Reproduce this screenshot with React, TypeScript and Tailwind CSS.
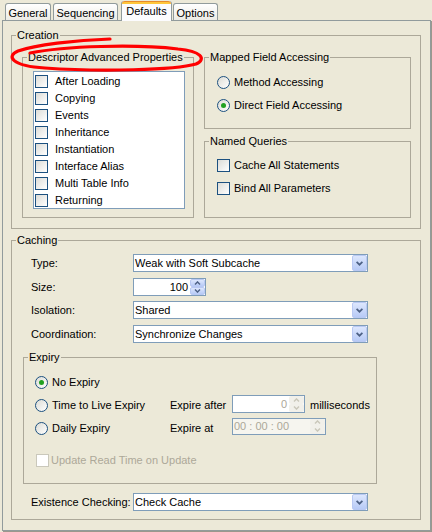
import type { ReactNode } from "react"

const DESCRIPTOR_ITEMS = [
  "After Loading",
  "Copying",
  "Events",
  "Inheritance",
  "Instantiation",
  "Interface Alias",
  "Multi Table Info",
  "Returning",
]

function Chevron({ up, disabled }: { up?: boolean; disabled?: boolean }) {
  return (
    <svg width="7" height="5" viewBox="0 0 7 5">
      <path
        d={up ? "M0.6 4.2 L3.5 1.3 L6.4 4.2" : "M0.6 0.8 L3.5 3.7 L6.4 0.8"}
        fill="none"
        stroke={disabled ? "#c9c7ba" : "#4d6185"}
        strokeWidth="1.7"
      />
    </svg>
  )
}

function SmallChevron({ up, disabled }: { up?: boolean; disabled?: boolean }) {
  return (
    <svg width="7" height="4" viewBox="0 0 7 4">
      <path
        d={up ? "M1 3.4 L3.5 0.9 L6 3.4" : "M1 0.6 L3.5 3.1 L6 0.6"}
        fill="none"
        stroke={disabled ? "#c9c7ba" : "#4d6185"}
        strokeWidth="1.4"
      />
    </svg>
  )
}

function Tab({ label, active, className }: { label: string; active?: boolean; className: string }) {
  if (active) {
    return (
      <div className={`relative z-10 -mb-[1px] h-[20px] rounded-t-[3px] border-x border-[#919b9c] bg-[#fcfcfe] ${className}`}>
        <div className="h-[3px] rounded-t-[3px] border-t border-[#e68b2c] bg-[#ffc73c]" />
        <div className="pt-[1px] text-center leading-[13px]">{label}</div>
      </div>
    )
  }
  return (
    <div
      className={`h-[17px] rounded-t-[3px] border border-b-0 border-[#919b9c] bg-[linear-gradient(180deg,#ffffff,#ecebe5)] pt-[3px] text-center leading-[13px] ${className}`}
    >
      {label}
    </div>
  )
}

function Group({ title, className = "", children }: { title: string; className?: string; children: ReactNode }) {
  return (
    <fieldset className={`min-w-0 border border-[#aca899] ${className}`}>
      <legend className="ml-[4px] px-[1px] leading-[13px]">{title}</legend>
      {children}
    </fieldset>
  )
}

function Check({ disabled }: { disabled?: boolean }) {
  return (
    <span
      className={
        disabled
          ? "h-[13px] w-[13px] shrink-0 border border-[#cac8bb] bg-white"
          : "h-[13px] w-[13px] shrink-0 border border-[#1c5180] bg-[linear-gradient(135deg,#dcdcd7,#ffffff)]"
      }
    />
  )
}

function Radio({ checked }: { checked?: boolean }) {
  return (
    <span className="flex h-[13px] w-[13px] shrink-0 items-center justify-center rounded-full border border-[#1c5180] bg-[linear-gradient(135deg,#dcdcd5,#ffffff)]">
      {checked && <span className="h-[5px] w-[5px] rounded-full bg-[#21a121]" />}
    </span>
  )
}

function Combo({ value }: { value: string }) {
  return (
    <div className="flex h-[18px] w-[235px] border border-[#7f9db9] bg-white">
      <span className="flex-1 pl-[1px] leading-[16px]">{value}</span>
      <span className="flex w-[15px] items-center justify-center rounded-[2px] border border-[#b9c9f3] bg-[linear-gradient(180deg,#dde7fd,#b7caf6)]">
        <Chevron />
      </span>
    </div>
  )
}

function SpinArrows({ disabled }: { disabled?: boolean }) {
  const btn = disabled
    ? "flex flex-1 items-center justify-center rounded-[2px] bg-[#f1f0ea]"
    : "flex flex-1 items-center justify-center rounded-[2px] border border-[#b9c9f3] bg-[linear-gradient(180deg,#dde7fd,#b7caf6)]"
  return (
    <span className="flex w-[15px] flex-col">
      <span className={btn}>
        <SmallChevron up disabled={disabled} />
      </span>
      <span className={btn}>
        <SmallChevron disabled={disabled} />
      </span>
    </span>
  )
}

function Row({ label, className = "", children }: { label: string; className?: string; children: ReactNode }) {
  return (
    <div className={`flex items-center pl-[8px] ${className}`}>
      <span className="w-[102px] shrink-0">{label}</span>
      {children}
    </div>
  )
}

export default function App() {
  return (
    <div className="relative h-[532px] w-[432px] overflow-hidden bg-[#ece9d8] font-['Liberation_Sans',Arial,sans-serif] text-[11px] leading-[13px] text-black">
      {/* tab strip */}
      <div className="flex h-[20px] items-end pl-[5px]">
        <Tab label="General" className="w-[46px]" />
        <Tab label="Sequencing" className="ml-[2px] w-[65px]" />
        <Tab label="Defaults" active className="ml-[3px] w-[51px]" />
        <Tab label="Options" className="ml-[1px] w-[45px]" />
      </div>

      {/* tab page */}
      <div className="ml-[2px] h-[511px] w-[429px] border border-[#919b9c] pl-[8px] pr-[9px] pt-[8px] shadow-[1px_1px_0_#9a988d]">
        <Group title="Creation" className="w-[410px]">
          <div className="flex gap-[10px] pb-[10px] pl-[10px] pr-[9px] pt-[9px]">
            <Group title="Descriptor Advanced Properties" className="w-[172px]">
              <div className="pb-[8px] pl-[10px] pr-[8px] pt-[7px]">
                <div className="h-[138px] border border-[#7f9db9] bg-white pl-[1px] pt-[1px]">
                  {DESCRIPTOR_ITEMS.map((item) => (
                    <div key={item} className="flex h-[17px] items-center">
                      <Check />
                      <span className="ml-[7px]">{item}</span>
                    </div>
                  ))}
                </div>
              </div>
            </Group>

            <div className="flex w-[207px] flex-col">
              <Group title="Mapped Field Accessing">
                <div className="pb-[11px] pl-[12px] pt-[7px]">
                  <div className="flex h-[23px] items-center">
                    <Radio />
                    <span className="ml-[4px]">Method Accessing</span>
                  </div>
                  <div className="flex h-[23px] items-center">
                    <Radio checked />
                    <span className="ml-[4px]">Direct Field Accessing</span>
                  </div>
                </div>
              </Group>
              <Group title="Named Queries" className="mt-[6px] flex-1">
                <div className="pl-[12px] pt-[6px]">
                  <div className="flex h-[23px] items-center">
                    <Check />
                    <span className="ml-[4px]">Cache All Statements</span>
                  </div>
                  <div className="flex h-[23px] items-center">
                    <Check />
                    <span className="ml-[4px]">Bind All Parameters</span>
                  </div>
                </div>
              </Group>
            </div>
          </div>
        </Group>

        <Group title="Caching" className="mt-[5px] w-[410px]">
          <div className="pb-[8px] pl-[11px] pt-[7px]">
            <Row label="Type:">
              <Combo value="Weak with Soft Subcache" />
            </Row>
            <Row label="Size:" className="mt-[6px]">
              <div className="flex h-[18px] w-[73px] border border-[#7f9db9] bg-white">
                <span className="flex-1 pr-[2px] text-right leading-[16px]">100</span>
                <SpinArrows />
              </div>
            </Row>
            <Row label="Isolation:" className="mt-[5px]">
              <Combo value="Shared" />
            </Row>
            <Row label="Coordination:" className="mt-[6px]">
              <Combo value="Synchronize Changes" />
            </Row>

            <Group title="Expiry" className="mt-[8px] w-[354px]">
              <div className="pb-[11px] pl-[11px] pt-[7px]">
                <div className="flex h-[23px] items-center">
                  <Radio checked />
                  <span className="ml-[4px]">No Expiry</span>
                </div>
                <div className="flex h-[23px] items-center">
                  <div className="flex w-[135px] items-center">
                    <Radio />
                    <span className="ml-[4px]">Time to Live Expiry</span>
                  </div>
                  <span className="w-[62px]">Expire after</span>
                  <div className="-mt-[3px] flex h-[18px] w-[73px] border border-[#7f9db9] bg-white">
                    <span className="flex-1 pr-[2px] text-right leading-[16px] text-[#aca899]">0</span>
                    <SpinArrows disabled />
                  </div>
                  <span className="ml-[5px]">milliseconds</span>
                </div>
                <div className="flex h-[23px] items-center">
                  <div className="flex w-[135px] items-center">
                    <Radio />
                    <span className="ml-[4px]">Daily Expiry</span>
                  </div>
                  <span className="w-[62px]">Expire at</span>
                  <div className="-mt-[5px] flex h-[17px] w-[94px] border border-[#7f9db9] bg-[#f6f5ef]">
                    <span className="flex-1 pl-[1px] leading-[15px] text-[#aca899]">00 : 00 : 00</span>
                    <SpinArrows disabled />
                  </div>
                </div>
                <div className="mt-[9px] flex h-[23px] items-center pl-[1px] text-[#aca899]">
                  <Check disabled />
                  <span className="ml-[2px]">Update Read Time on Update</span>
                </div>
              </div>
            </Group>

            <Row label="Existence Checking:" className="mt-[9px]">
              <Combo value="Check Cache" />
            </Row>
          </div>
        </Group>
      </div>

      {/* hand-drawn red mark around the descriptor group title */}
      <svg className="pointer-events-none absolute left-0 top-0" width="432" height="532" viewBox="0 0 432 532">
        <path
          d="M110 39 C75 40 35 45 18 51 C6 56 11 66 45 68 C100 72 175 70 196 64 C207 59 201 51 178 49 C135 44 65 46 30 53"
          fill="none"
          stroke="#ff0000"
          strokeWidth="3.2"
          strokeLinecap="round"
        />
      </svg>
    </div>
  )
}
